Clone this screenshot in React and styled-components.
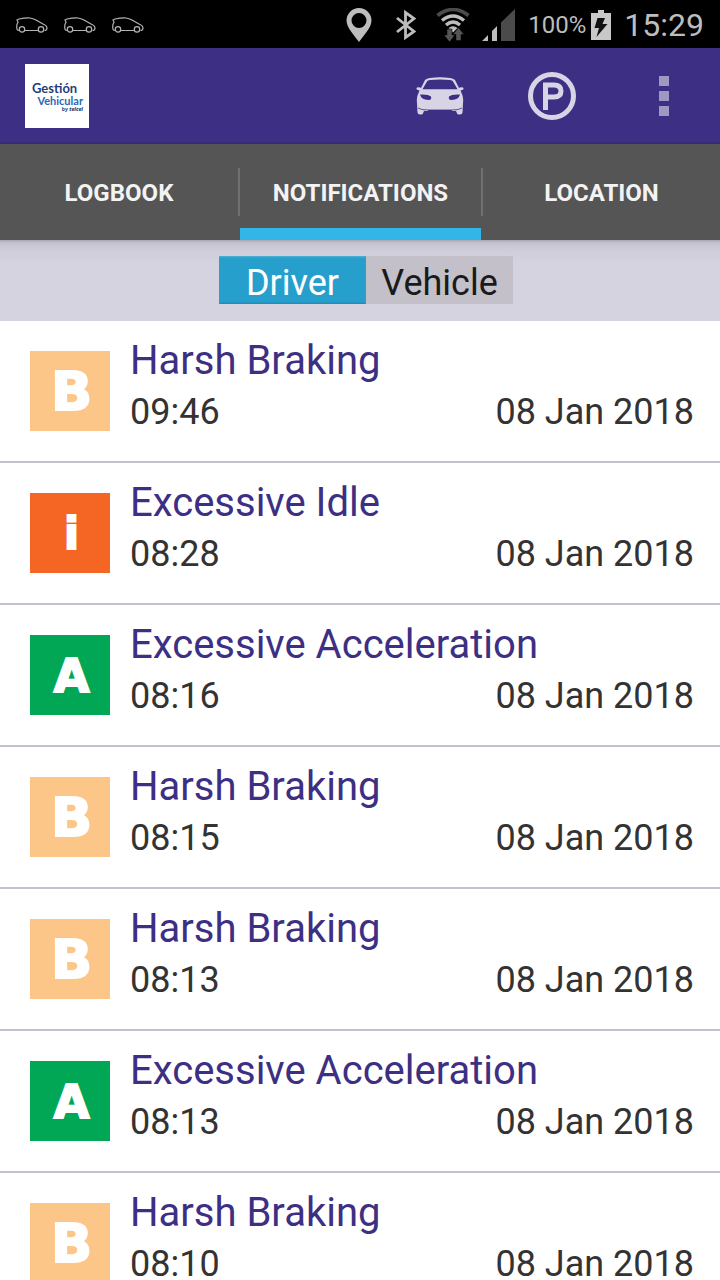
import { createGlobalStyle, styled } from 'styled-components'


const GlobalStyle = createGlobalStyle`
    *, *::before, *::after {
        box-sizing: border-box;
    }

    body {
        margin: 0;
        background: #fff;
        font-family: Roboto, "Liberation Sans", sans-serif;
    }

    button {
        border: 0;
        padding: 0;
        background: none;
        font: inherit;
        color: inherit;
        cursor: pointer;
    }
`

const Screen = styled.div`
    display: flex;
    flex-direction: column;
    height: 100vh;
    overflow: hidden;
`

const StatusBar = styled.div`
    flex: none;
    display: flex;
    align-items: center;
    justify-content: space-between;
    height: 48px;
    padding: 2px 16px 0;
    background: #000;
    color: #bdbdbd;
`

const StatusGroup = styled.div`
    display: flex;
    align-items: center;
    gap: ${props => props.$gap}px;

    svg {
        display: block;
    }
`

const BatteryLevel = styled.span`
    font-size: 24px;
    line-height: 28px;
`

const Clock = styled.span`
    margin-left: 8px;
    font-size: 32px;
    line-height: 38px;
`

const ActionBar = styled.header`
    flex: none;
    display: flex;
    align-items: center;
    justify-content: space-between;
    height: 96px;
    padding-left: 25px;
    background: #3d2f84;
    box-shadow: inset 0 -2px #382a78;
`

const Logo = styled.div`
    display: flex;
    flex-direction: column;
    width: 64px;
    height: 64px;
    padding: 17px 6px 0 7px;
    background: #fff;
    font-family: "Open Sans", sans-serif;
    font-weight: 700;
    color: #1f3f7a;
`

const LogoName = styled.span`
    font-family: Lato, sans-serif;
    font-size: 13px;
    line-height: 14px;
`

const LogoProduct = styled.span`
    align-self: flex-end;
    font-family: Lato, sans-serif;
    font-size: 11px;
    line-height: 11px;
    color: #2c66b8;
`

const LogoBrand = styled.span`
    align-self: flex-end;
    font-size: 5px;
    line-height: 6px;

    b {
        font-style: italic;
        font-weight: 800;
    }
`

const Actions = styled.div`
    display: flex;
`

const ActionButton = styled.button`
    display: flex;
    align-items: center;
    justify-content: center;
    width: 112px;
    height: 96px;
`

const Tabs = styled.nav`
    flex: none;
    display: grid;
    grid-template-columns: 238fr 2px 241fr 2px 237fr;
    height: 96px;
    background: #555;
`

const TabDivider = styled.span`
    height: 48px;
    margin-top: 24px;
    background: #707070;
`

const Tab = styled.button`
    padding-top: 2px;
    border-top: 12px solid transparent;
    border-bottom: 12px solid ${props => props.$active ? '#33b5e5' : 'transparent'};
    font-size: 24px;
    font-weight: 700;
    color: #f3f3f3;
    text-transform: uppercase;
`

const FilterBar = styled.div`
    flex: none;
    display: flex;
    justify-content: center;
    padding: 16px 0 17px 12px;
    background: linear-gradient(#a9a7b1 0, #c6c3d0 3px, #d0cdda 10px, #d6d3e1 24px);
`

const FilterButton = styled.button`
    width: 147px;
    height: 48px;
    padding-top: 6px;
    font-size: 36px;
    line-height: 42px;
    color: ${props => props.$active ? '#fff' : '#1a1a1a'};
    background: ${props => props.$active ? '#279fcc' : '#c3c0c9'};
    box-shadow: ${props => props.$active ? 'inset 0 1px 2px #55b4d4, inset 0 -1px 2px #2383a8' : 'none'};
`

const NotificationList = styled.ul`
    margin: 0;
    padding: 0;
    list-style: none;
`

const Notification = styled.li`
    display: flex;
    align-items: flex-start;
    gap: 20px;
    height: 142px;
    padding: 16px 26px 0 30px;
    border-bottom: 2px solid #c3c0cf;
`

const Badge = styled.span`
    flex: none;
    width: 80px;
    height: 80px;
    margin-top: 14px;
    padding-left: 3px;
    background: ${props => props.$color};
    color: #fff;
    font-family: "DejaVu Sans", sans-serif;
    font-size: ${props => props.$size}px;
    font-weight: 700;
    line-height: 82px;
    text-align: center;
    -webkit-text-stroke: 2px #fff;
`

const NotificationBody = styled.div`
    flex: 1;
    display: flex;
    flex-direction: column;
    gap: 6px;
`

const NotificationTitle = styled.h2`
    margin: 0;
    font-size: 40px;
    font-weight: 400;
    line-height: 48px;
    color: #3d2f84;
`

const NotificationMeta = styled.div`
    display: flex;
    justify-content: space-between;
    font-size: 36px;
    line-height: 42px;
    color: #333;
`


const kinds = {
    braking: { title: 'Harsh Braking', letter: 'B', color: '#fcc688', size: 54 },
    idle: { title: 'Excessive Idle', letter: 'i', color: '#f56624', size: 44 },
    acceleration: { title: 'Excessive Acceleration', letter: 'A', color: '#02a755', size: 46 },
}

const notifications = [
    { kind: 'braking', time: '09:46', date: '08 Jan 2018' },
    { kind: 'idle', time: '08:28', date: '08 Jan 2018' },
    { kind: 'acceleration', time: '08:16', date: '08 Jan 2018' },
    { kind: 'braking', time: '08:15', date: '08 Jan 2018' },
    { kind: 'braking', time: '08:13', date: '08 Jan 2018' },
    { kind: 'acceleration', time: '08:13', date: '08 Jan 2018' },
    { kind: 'braking', time: '08:10', date: '08 Jan 2018' },
]


function CarOutline() {
    return (
        <svg width="32" height="16" viewBox="0 0 32 16" fill="none" stroke="#b4b4b4" strokeWidth="1.2">
            <path d="M3 13.5 Q.8 13.5 .8 11 V8 L2 5 L1 3 L3 2 Q9 .8 14 1 Q17 1.3 20 3 L27 7 Q31 8.5 31 11 Q31 13.5 28.5 13.5 M9 13.5 H22" />
            <circle cx="6" cy="12.4" r="2.7" />
            <circle cx="25" cy="12.4" r="2.7" />
        </svg>
    )
}

function PinIcon() {
    return (
        <svg width="26" height="34" viewBox="0 0 26 34" fill="#bdbdbd">
            <path fillRule="evenodd" d="M13 0 A12.5 12.5 0 0 1 25.5 12.5 C25.5 20 17 28 13 34 C9 28 .5 20 .5 12.5 A12.5 12.5 0 0 1 13 0 Z M13 5 A7.5 7.5 0 1 0 13 20 A7.5 7.5 0 1 0 13 5 Z" />
        </svg>
    )
}

function BluetoothIcon() {
    return (
        <svg width="20" height="32" viewBox="0 0 20 32" fill="none" stroke="#bdbdbd" strokeWidth="2.8">
            <path d="M1 9 L18 22.5 L9.5 28.5 V3.5 L18 9.5 L1 23" />
        </svg>
    )
}

function WifiIcon() {
    return (
        <svg width="34" height="34" viewBox="0 0 34 34" fill="none">
            <path d="M1.5 7.5 Q17 -4.5 32.5 7.5" stroke="#4b4b4b" strokeWidth="3.6" />
            <path d="M6 12.5 Q17 3.5 28 12.5" stroke="#bdbdbd" strokeWidth="3.4" />
            <path d="M10 17 Q17 11 24 17" stroke="#bdbdbd" strokeWidth="3.4" />
            <path d="M12.5 20 Q17 16.5 21.5 20 L17 24.5 Z" fill="#bdbdbd" />
            <path d="M11 21 H16 V27 H19 L13.5 34 L8 27 H11 Z M25 32.5 V26.5 H28 L22.5 19.5 L17 26.5 H20 V32.5 Z" fill="#555" stroke="#000" strokeWidth=".5" />
        </svg>
    )
}

function SignalIcon() {
    return (
        <svg width="34" height="34" viewBox="0 0 34 34">
            <path d="M0 33 L6 27 V33 Z M10 23 L15 18 V33 H10 Z" fill="#bdbdbd" />
            <path d="M19 14.5 L33 1 V33 H19 Z" fill="#4b4b4b" />
        </svg>
    )
}

function BatteryIcon() {
    return (
        <svg width="20" height="30" viewBox="0 0 20 30">
            <path d="M7 0 H13 V3 H20 V30 H0 V3 H7 Z" fill="#c8c8c8" />
            <path d="M6.5 8 H14 L11.5 14 H16.5 L5.5 27 L8 18 H3.5 Z" fill="#111" />
        </svg>
    )
}

function CarIcon() {
    return (
        <svg width="48" height="40" viewBox="0 0 48 40" fill="#d8d4e6">
            <path fillRule="evenodd" d="M9 4 Q10.5 2.5 14 2 Q24 .7 34 2 Q37.5 2.5 39 4 L43 12 Q44 11 47 11.5 Q49 14 44.5 14.5 L45.5 17 Q47.8 21 47 27 L46.5 36.5 Q46.5 38.5 44 38.5 H42.5 Q41 38.5 40.5 36 L40 35 H8 L7.5 36 Q7 38.5 5.5 38.5 H4 Q1.5 38.5 1.5 36.5 L1 27 Q.2 21 2.5 17 L3.5 14.5 Q-1 14 1 11.5 Q4 11 5 12 Z M11 5.5 L6.5 13.3 H41.5 L37 5.5 Q36.5 4.4 34 4 Q24 2.8 14 4 Q11.5 4.4 11 5.5 Z" />
            <path d="M4 18.5 Q12 18 15 20.5 Q16 24 12.5 24 Q5 23.5 4 18.5 Z M44 18.5 Q36 18 33 20.5 Q32 24 35.5 24 Q43 23.5 44 18.5 Z M12 36 V34 H36 V36 Z" fill="#3d2f84" />
            <path d="M2 32 Q5 34 12 34 H36 Q43 34 46 32" fill="none" stroke="#3d2f84" strokeWidth=".8" />
        </svg>
    )
}

function ParkingIcon() {
    return (
        <svg width="48" height="48" viewBox="0 0 48 48" fill="none" stroke="#d8d4e6">
            <circle cx="24" cy="24" r="21.5" strokeWidth="5" />
            <path d="M17.5 38 V13 H26 Q33 13 33 19 Q33 25 26 25 H17.5" strokeWidth="5" />
        </svg>
    )
}

function MoreIcon() {
    return (
        <svg width="10" height="40" viewBox="0 0 10 40" fill="#9f98c2">
            <path d="M0 0 H10 V10 H0 Z M0 15 H10 V25 H0 Z M0 30 H10 V40 H0 Z" />
        </svg>
    )
}


export default function App() {
    return (
        <Screen>
            <GlobalStyle />
            <StatusBar>
                <StatusGroup $gap={16}>
                    <CarOutline />
                    <CarOutline />
                    <CarOutline />
                </StatusGroup>
                <StatusGroup $gap={20}>
                    <StatusGroup $gap={24}>
                        <PinIcon />
                        <BluetoothIcon />
                    </StatusGroup>
                    <StatusGroup $gap={12}>
                        <WifiIcon />
                        <SignalIcon />
                        <StatusGroup $gap={5}>
                            <BatteryLevel>100%</BatteryLevel>
                            <BatteryIcon />
                            <Clock>15:29</Clock>
                        </StatusGroup>
                    </StatusGroup>
                </StatusGroup>
            </StatusBar>

            <ActionBar>
                <Logo>
                    <LogoName>Gestión</LogoName>
                    <LogoProduct>Vehicular</LogoProduct>
                    <LogoBrand>by <b>telcel</b></LogoBrand>
                </Logo>
                <Actions>
                    <ActionButton aria-label="Vehicle"><CarIcon /></ActionButton>
                    <ActionButton aria-label="Parking"><ParkingIcon /></ActionButton>
                    <ActionButton aria-label="More options"><MoreIcon /></ActionButton>
                </Actions>
            </ActionBar>

            <Tabs>
                <Tab>Logbook</Tab>
                <TabDivider />
                <Tab $active>Notifications</Tab>
                <TabDivider />
                <Tab>Location</Tab>
            </Tabs>

            <FilterBar>
                <FilterButton $active aria-pressed="true">Driver</FilterButton>
                <FilterButton aria-pressed="false">Vehicle</FilterButton>
            </FilterBar>

            <NotificationList>
                {notifications.map((item, index) => {
                    const kind = kinds[item.kind]
                    return (
                        <Notification key={index}>
                            <Badge $color={kind.color} $size={kind.size}>{kind.letter}</Badge>
                            <NotificationBody>
                                <NotificationTitle>{kind.title}</NotificationTitle>
                                <NotificationMeta>
                                    <span>{item.time}</span>
                                    <span>{item.date}</span>
                                </NotificationMeta>
                            </NotificationBody>
                        </Notification>
                    )
                })}
            </NotificationList>
        </Screen>
    )
}
